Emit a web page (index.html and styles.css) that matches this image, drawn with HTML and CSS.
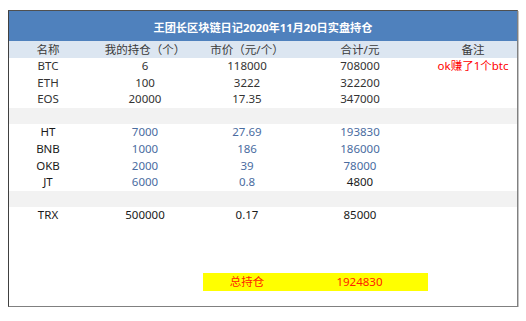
FILE: index.html
```html
<!DOCTYPE html>
<html lang="zh">
<head>
<meta charset="utf-8">
<link rel="stylesheet" href="styles.css">
</head>
<body>
<div class="sheet">
  <div class="title">王团长区块链日记2020年11月20日实盘持仓</div>
  <div class="row head">
    <div>名称</div><div>我的持仓（个）</div><div>市价（元/个）</div><div>合计/元</div><div>备注</div>
  </div>
  <div class="row"><div>BTC</div><div>6</div><div>118000</div><div>708000</div><div class="red">ok赚了1个btc</div></div>
  <div class="row"><div>ETH</div><div>100</div><div>3222</div><div>322200</div><div></div></div>
  <div class="row"><div>EOS</div><div>20000</div><div>17.35</div><div>347000</div><div></div></div>
  <div class="row gap"></div>
  <div class="row"><div class="dark">HT</div><div class="blue">7000</div><div class="blue">27.69</div><div class="blue">193830</div><div></div></div>
  <div class="row"><div class="dark">BNB</div><div class="blue">1000</div><div class="blue">186</div><div class="blue">186000</div><div></div></div>
  <div class="row"><div class="dark">OKB</div><div class="blue">2000</div><div class="blue">39</div><div class="blue">78000</div><div></div></div>
  <div class="row"><div class="dark">JT</div><div class="blue">6000</div><div class="blue">0.8</div><div class="dark">4800</div><div></div></div>
  <div class="row gap"></div>
  <div class="row"><div class="dark">TRX</div><div class="dark">500000</div><div class="dark">0.17</div><div class="dark">85000</div><div></div></div>
  <div class="total">
    <div class="total-box"><div>总持仓</div><div>1924830</div></div>
  </div>
</div>
</body>
</html>
```
FILE: styles.css
```css
html, body {
  margin: 0;
  padding: 0;
  background: #ffffff;
}
body {
  padding: 10px 0 0 8px;
  font-family: "Noto Sans", "Noto Sans CJK SC", sans-serif;
  font-size: 11.5px;
  color: #333333;
}
.sheet {
  box-sizing: border-box;
  width: 510px;
  height: 297px;
  border-left: 1px solid #404040;
  border-top: 1px solid #505050;
  border-right: 1px solid #808080;
  border-bottom: 1px solid #808080;
  box-shadow: 1px 1px 0 #c4c4c4;
  background: #ffffff;
}
.title {
  height: 30px;
  background: #4f81bd;
  color: #ffffff;
  font-weight: bold;
  font-size: 11.2px;
  display: flex;
  align-items: center;
  justify-content: center;
  padding-top: 1px;
  box-sizing: border-box;
}
.row {
  display: grid;
  grid-template-columns: 78px 116px 88px 138px 1fr;
  height: 16.6px;
  line-height: 16.6px;
  text-align: center;
  white-space: nowrap;
}
.row.head {
  height: 17px;
  line-height: 17px;
  background: #dce6f1;
  color: #3a3a3a;
}
.row.gap {
  background: #f2f2f2;
}
.red {
  color: #ff0000;
}
.blue {
  color: #4a6c9f;
}
.dark {
  color: #1a1a1a;
}
.total {
  padding-top: 49px;
  padding-left: 194px;
}
.total-box {
  display: grid;
  grid-template-columns: 88px 137px;
  width: 225px;
  height: 18px;
  line-height: 18px;
  background: #ffff00;
  color: #ff2200;
  text-align: center;
}
```
